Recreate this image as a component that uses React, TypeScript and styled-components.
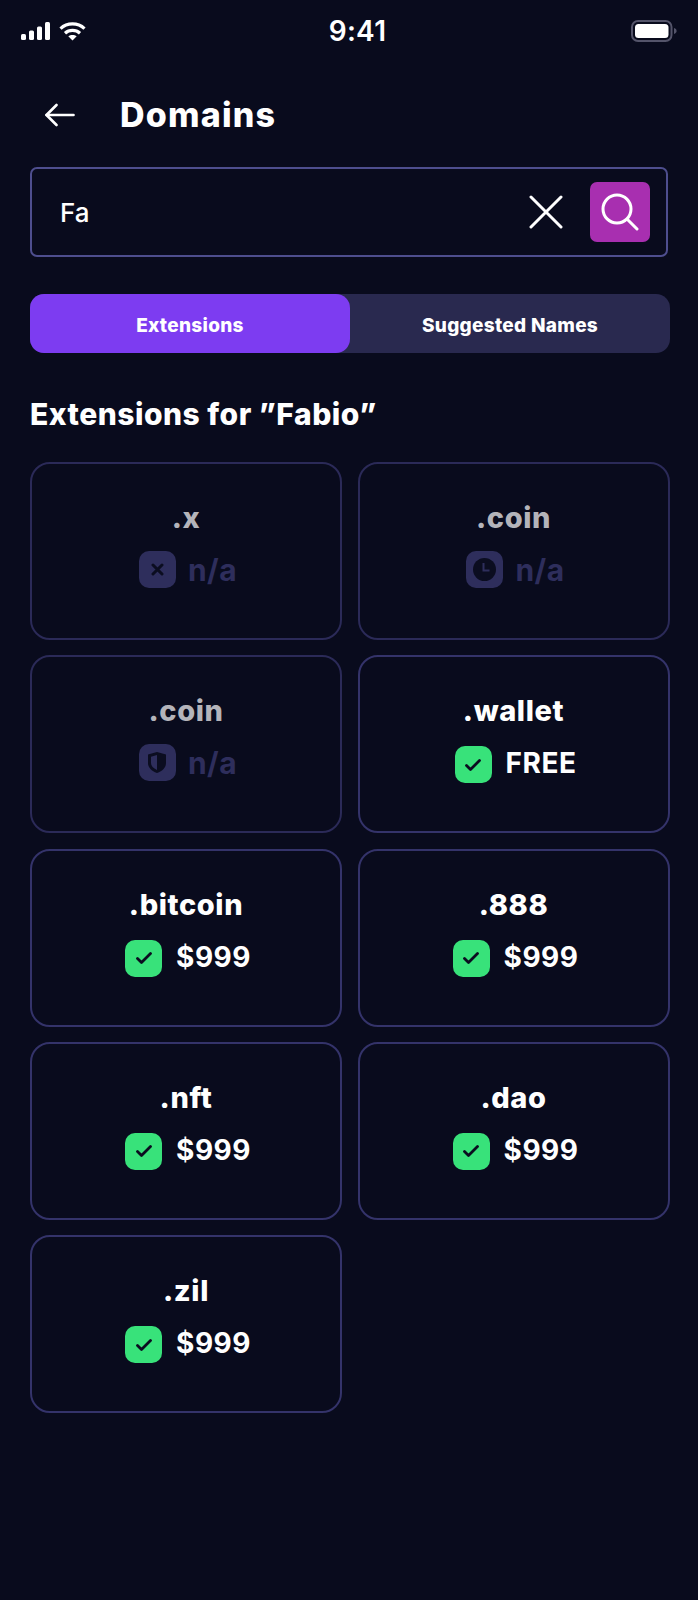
import styled, { createGlobalStyle } from 'styled-components';

const GlobalStyle = createGlobalStyle`
  html, body {
    margin: 0;
    padding: 0;
    background: #090b1d;
  }
  * {
    box-sizing: border-box;
  }
`;

const Page = styled.div`
  width: 698px;
  height: 1600px;
  background: #090b1d;
  color: #fff;
  font-family: Inter, 'Noto Sans', sans-serif;
  overflow: hidden;
`;

const StatusBar = styled.div`
  height: 62px;
  padding: 0 21px;
  display: grid;
  grid-template-columns: 1fr auto 1fr;
  align-items: center;
`;

const StatusLeft = styled.div`
  display: flex;
  align-items: center;
  gap: 8px;
`;

const StatusTime = styled.div`
  padding-left: 17px;
  font-size: 28px;
  font-weight: 600;
  letter-spacing: 0.3px;
`;

const StatusRight = styled.div`
  display: flex;
  justify-content: flex-end;
`;

const Header = styled.div`
  height: 105px;
  padding: 0 0 0 45px;
  display: flex;
  align-items: center;
  gap: 45px;
`;

const Title = styled.h1`
  margin: 0;
  font-size: 34px;
  font-weight: 800;
  letter-spacing: 1.2px;
`;

const Content = styled.div`
  padding: 0 29px 0 30px;
`;

const SearchBox = styled.div`
  width: 638px;
  height: 90px;
  border: 2px solid #4e4e8e;
  border-radius: 7px;
  padding: 0 16px 0 28px;
  display: flex;
  align-items: center;
`;

const SearchText = styled.div`
  flex: 1;
  font-size: 26px;
  font-weight: 500;
`;

const ClearIcon = styled.svg`
  width: 34px;
  height: 34px;
  margin-right: 27px;
`;

const SearchButton = styled.div`
  width: 60px;
  height: 60px;
  border-radius: 7px;
  background: #a82fb0;
  display: flex;
  align-items: center;
  justify-content: center;
`;

const Tabs = styled.div`
  margin-top: 37px;
  height: 59px;
  width: 640px;
  border-radius: 14px;
  background: #29294f;
  display: grid;
  grid-template-columns: 320px 320px;
`;

const Tab = styled.div<{ $active?: boolean }>`
  padding-top: 3px;
  border-radius: 14px;
  background: ${(p) => (p.$active ? '#7d3cf1' : 'transparent')};
  display: flex;
  align-items: center;
  justify-content: center;
  font-size: 19px;
  font-weight: 800;
  letter-spacing: 0.3px;
`;

const Heading = styled.h2`
  margin: 41px 0 28px;
  font-size: 30px;
  line-height: 40px;
  font-weight: 800;
  letter-spacing: 0.5px;
`;

const Grid = styled.div`
  width: 640px;
  display: grid;
  grid-template-columns: 312px 312px;
  grid-auto-rows: 178px;
  column-gap: 15.5px;
  row-gap: 15.33px;
`;

const Card = styled.div<{ $muted?: boolean }>`
  border: 2px solid ${(p) => (p.$muted ? '#2b2a58' : '#34336a')};
  border-radius: 20px;
  padding-top: 34px;
  display: flex;
  flex-direction: column;
  align-items: center;
`;

const Name = styled.div<{ $muted?: boolean }>`
  font-size: 29px;
  line-height: 40px;
  font-weight: 800;
  letter-spacing: 0.6px;
  color: ${(p) => (p.$muted ? '#b4b4ba' : '#fff')};
`;

const Status = styled.div`
  margin-top: 13px;
  padding-left: 4px;
  display: flex;
  align-items: flex-start;
  gap: 14px;
`;

const StatusBadge = styled.div<{ $muted?: boolean }>`
  margin-top: ${(p) => (p.$muted ? '0' : '2px')};
  width: 37px;
  height: 37px;
  border-radius: 10px;
  background: ${(p) => (p.$muted ? '#2e2e5c' : '#38e27a')};
  display: flex;
  align-items: center;
  justify-content: center;
`;

const Price = styled.div<{ $muted?: boolean }>`
  margin-left: ${(p) => (p.$muted ? '-2px' : '0')};
  font-size: ${(p) => (p.$muted ? '30px' : '28px')};
  line-height: 38px;
  font-weight: 700;
  letter-spacing: 0.5px;
  color: ${(p) => (p.$muted ? '#2e2e5c' : '#fff')};
`;

const Signal = () => (
  <svg width="30" height="18" viewBox="0 0 30 18" fill="#fff">
    <rect x="0" y="12" width="5" height="6" rx="1.5" />
    <rect x="8" y="8.5" width="5" height="9.5" rx="1.5" />
    <rect x="16" y="4.500" width="5" height="13.5" rx="1.5" />
    <rect x="24" y="0" width="5" height="18" rx="1.5" />
  </svg>
);

const Wifi = () => (
  <svg width="27" height="19" viewBox="0 0 27 19" fill="none" stroke="#fff" strokeWidth="3.2">
    <path d="M1.5 6.6C8.2 .4 18.8 .4 25.5 6.6" />
    <path d="M6 11.2c4.2-3.8 10.8-3.8 15 0" />
    <path d="M13.5 18.6l-4.2-4.3c2.4-1.9 6-1.9 8.4 0z" fill="#fff" stroke="none" />
  </svg>
);

const Battery = () => (
  <svg width="46" height="22" viewBox="0 0 46 22">
    <rect x="1" y="1" width="39.5" height="20" rx="6" fill="none" stroke="#54546a" strokeWidth="2" />
    <rect x="4" y="4" width="33.5" height="14" rx="3.5" fill="#fff" />
    <path d="M43 8c1.6.4 2.6 1.6 2.6 3s-1 2.6-2.6 3z" fill="#54546a" />
  </svg>
);

const BackArrow = () => (
  <svg width="30" height="24" viewBox="0 0 30 24" fill="none" stroke="#fff" strokeWidth="2.6" strokeLinecap="round" strokeLinejoin="round">
    <path d="M1.5 12h27" />
    <path d="M11.5 2 1.5 12l10 10" />
  </svg>
);

const SearchGlyph = () => (
  <svg width="38" height="38" viewBox="0 0 38 38" fill="none" stroke="#fff" strokeWidth="3" strokeLinecap="round">
    <circle cx="16" cy="16" r="14" />
    <path d="M27 27l9 9" />
  </svg>
);

const CheckGlyph = () => (
  <svg width="16" height="12" viewBox="0 0 16 12" fill="none" stroke="#0b0d20" strokeWidth="2.8" strokeLinecap="round" strokeLinejoin="round">
    <path d="M1.500 6.500l4 4L14.500 1.500" />
  </svg>
);

const CrossGlyph = () => (
  <svg width="13" height="13" viewBox="0 0 13 13" fill="none" stroke="#0b0d20" strokeWidth="3" strokeLinecap="round">
    <path d="M2 2l9 9M11 2l-9 9" />
  </svg>
);

const ClockGlyph = () => (
  <svg width="23" height="23" viewBox="0 0 23 23" fill="none">
    <circle cx="11.5" cy="11.5" r="11.5" fill="#0b0d20" />
    <path d="M10.500 5v7.500h6" stroke="#2e2e5c" strokeWidth="2" />
  </svg>
);

const ShieldGlyph = () => (
  <svg width="18" height="21" viewBox="0 0 18 21">
    <path d="M9 0l9 2.500v8.500c0 4.500-3.500 8-9 10C3.500 19 0 15.500 0 11V2.500z" fill="#0b0d20" />
    <path d="M9 3 3 4.800V11c0 3 2.200 5.300 6 7z" fill="#2e2e5c" />
  </svg>
);

type Extension = {
  name: string;
  price: string;
  icon: 'check' | 'cross' | 'clock' | 'shield';
};

const extensions: Extension[] = [
  { name: '.x', price: 'n/a', icon: 'cross' },
  { name: '.coin', price: 'n/a', icon: 'clock' },
  { name: '.coin', price: 'n/a', icon: 'shield' },
  { name: '.wallet', price: 'FREE', icon: 'check' },
  { name: '.bitcoin', price: '$999', icon: 'check' },
  { name: '.888', price: '$999', icon: 'check' },
  { name: '.nft', price: '$999', icon: 'check' },
  { name: '.dao', price: '$999', icon: 'check' },
  { name: '.zil', price: '$999', icon: 'check' },
];

const glyphs = {
  check: <CheckGlyph />,
  cross: <CrossGlyph />,
  clock: <ClockGlyph />,
  shield: <ShieldGlyph />,
};

const App = () => {
  return (
    <Page>
      <GlobalStyle />
      <StatusBar>
        <StatusLeft>
          <Signal />
          <Wifi />
        </StatusLeft>
        <StatusTime>9:41</StatusTime>
        <StatusRight>
          <Battery />
        </StatusRight>
      </StatusBar>
      <Header>
        <BackArrow />
        <Title>Domains</Title>
      </Header>
      <Content>
        <SearchBox>
          <SearchText>Fa</SearchText>
          <ClearIcon viewBox="0 0 34 34" fill="none" stroke="#fff" strokeWidth="3" strokeLinecap="round">
            <path d="M2 2l30 30M32 2 2 32" />
          </ClearIcon>
          <SearchButton>
            <SearchGlyph />
          </SearchButton>
        </SearchBox>
        <Tabs>
          <Tab $active>Extensions</Tab>
          <Tab>Suggested Names</Tab>
        </Tabs>
        <Heading>Extensions for ”Fabio”</Heading>
        <Grid>
          {extensions.map((ext, i) => {
            const muted = ext.price === 'n/a';
            return (
              <Card key={i} $muted={muted}>
                <Name $muted={muted}>{ext.name}</Name>
                <Status>
                  <StatusBadge $muted={muted}>{glyphs[ext.icon]}</StatusBadge>
                  <Price $muted={muted}>{ext.price}</Price>
                </Status>
              </Card>
            );
          })}
        </Grid>
      </Content>
    </Page>
  );
};

export default App;
